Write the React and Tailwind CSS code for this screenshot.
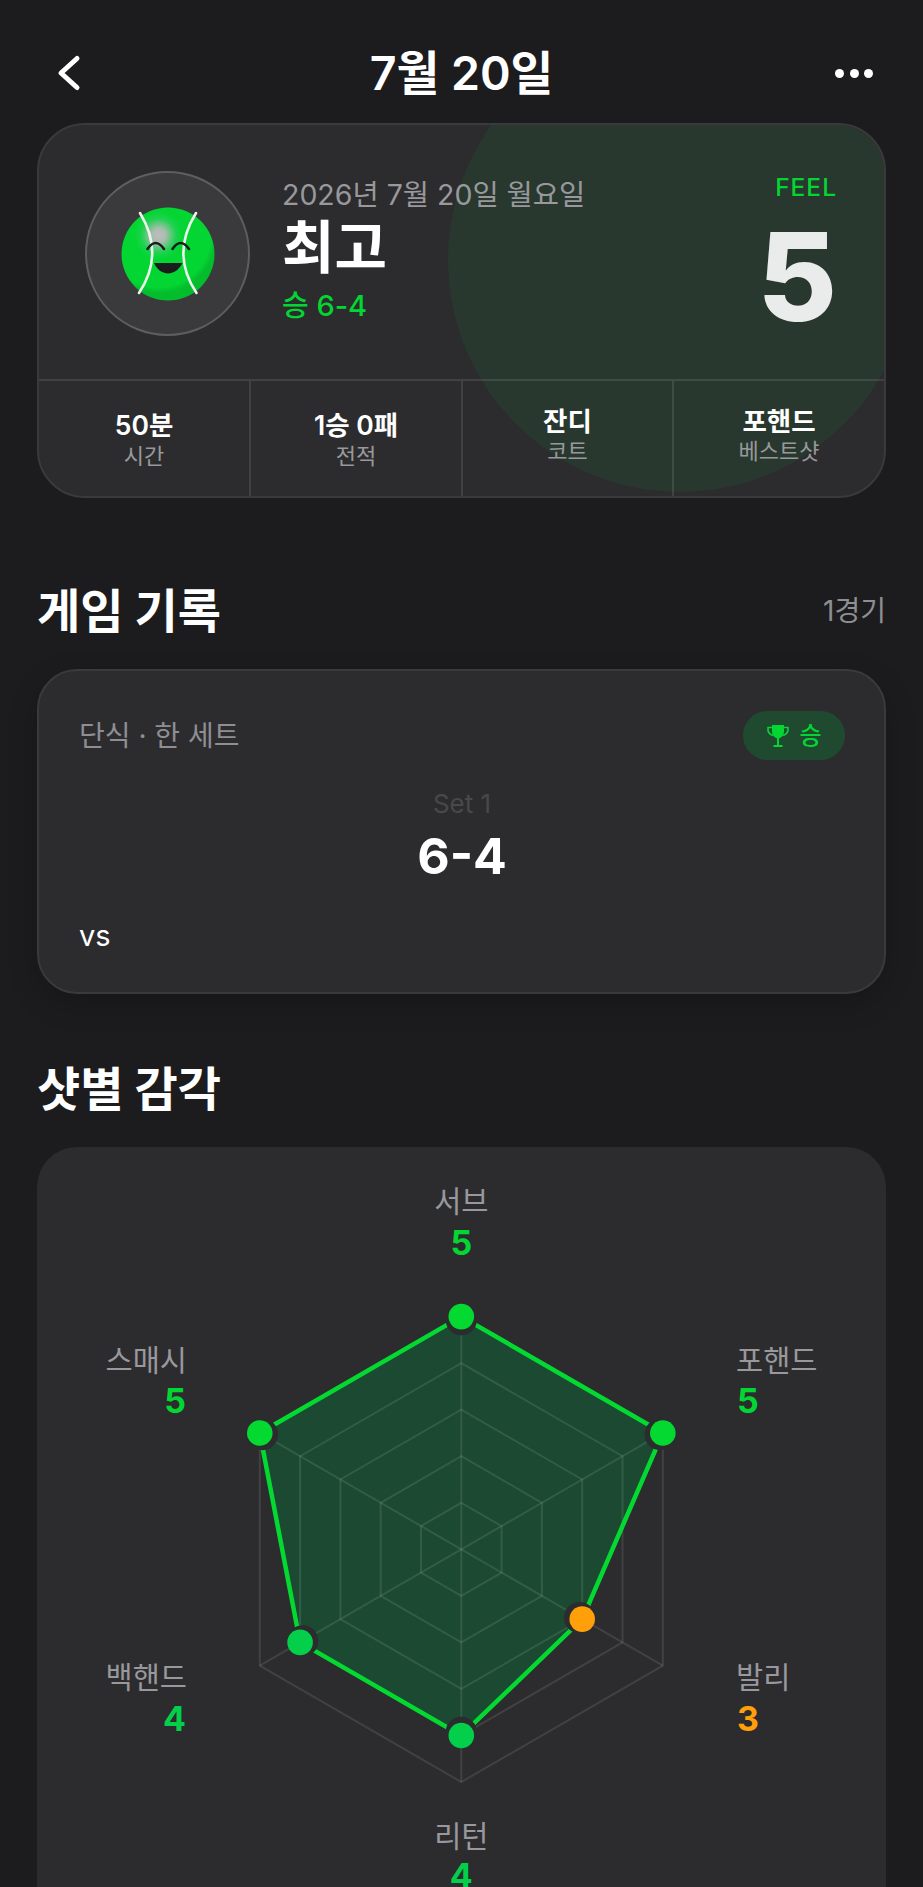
import React from "react";

const font = "font-['Inter','Noto_Sans_CJK_KR',sans-serif]";

const stats = [
	{ value: "50분", label: "시간", up: false },
	{ value: "1승 0패", label: "전적", up: false },
	{ value: "잔디", label: "코트", up: true },
	{ value: "포핸드", label: "베스트샷", up: true },
];

const cx = 461.3;
const cy = 1549.3 - 1147;
const R = 232.7;
const shots = [
	{ v: 5, color: "#04d932" },
	{ v: 5, color: "#04d932" },
	{ v: 3, color: "#ff9f0a" },
	{ v: 4, color: "#03cf4b" },
	{ v: 4, color: "#03cf4b" },
	{ v: 5, color: "#04d932" },
];

function pt(i, r) {
	const a = (Math.PI / 3) * i - Math.PI / 2;
	return [cx + r * Math.cos(a), cy + r * Math.sin(a)];
}
function ring(r) {
	return [0, 1, 2, 3, 4, 5].map((i) => pt(i, r).join(",")).join(" ");
}

function TennisFace() {
	return (
		<svg width="94" height="94" viewBox="0 0 94 94" className="overflow-visible">
			<defs>
				<radialGradient id="ball" cx="0.4" cy="0.3" r="0.62">
					<stop offset="0" stopColor="#bdbdbd" />
					<stop offset="0.12" stopColor="#a9bdaf" />
					<stop offset="0.3" stopColor="#1dd24f" />
					<stop offset="0.42" stopColor="#03d632" />
					<stop offset="0.9" stopColor="#03d632" />
					<stop offset="1" stopColor="#03bd2d" />
				</radialGradient>
			</defs>
			<circle cx="47" cy="47" r="46.5" fill="url(#ball)" />
			<path d="M19 6Q44 47 18 86" fill="none" stroke="#eef3ee" strokeWidth="2.6" strokeLinecap="round" />
			<path d="M75 6Q49.500 47 75.500 86" fill="none" stroke="#eef3ee" strokeWidth="2.6" strokeLinecap="round" />
			<path d="M26.500 42Q34.500 30 43 42" fill="none" stroke="#1c1c1e" strokeWidth="2.6" strokeLinecap="round" />
			<path d="M51.500 42Q59.500 30 68 42" fill="none" stroke="#1c1c1e" strokeWidth="2.6" strokeLinecap="round" />
			<path d="M33 56H61.500C58 63 52 66.500 47 66.500C42 66.500 36 63 33 56Z" fill="#1c1c1e" />
		</svg>
	);
}

function Radar() {
	const poly = shots.map((s, i) => pt(i, (R * s.v) / 5).join(",")).join(" ");
	return (
		<svg width="923" height="740" viewBox="0 0 923 740" className="block">
			<polygon points={poly} fill="#1c4931" />
			{[1, 2, 3, 4, 5].map((l) => (
				<polygon key={l} points={ring((R * l) / 5)} fill="none" stroke="#ffffff" strokeOpacity="0.1" strokeWidth="2" />
			))}
			{[0, 1, 2, 3, 4, 5].map((i) => {
				const p = pt(i, R);
				return <line key={i} x1={cx} y1={cy} x2={p[0]} y2={p[1]} stroke="#ffffff" strokeOpacity="0.1" strokeWidth="2" />;
			})}
			<polygon points={poly} fill="none" stroke="#04d932" strokeWidth="4.5" strokeLinejoin="round" />
			{shots.map((s, i) => {
				const r = (R * s.v) / 5;
				const a = pt(i, r - 3);
				const b = pt(i, r);
				return (
					<g key={i}>
						<circle cx={a[0]} cy={a[1]} r="15.7" fill="#2c2c2e" />
						<circle cx={b[0]} cy={b[1]} r="12.8" fill={s.color} />
					</g>
				);
			})}
			<g fontSize="29.500" fill="#98989d" fontFamily="Inter, 'Noto Sans CJK KR', sans-serif">
				<text x={cx} y="65" textAnchor="middle">서브</text>
				<text x="736" y="224" textAnchor="start">포핸드</text>
				<text x="736" y="541" textAnchor="start">발리</text>
				<text x={cx} y="700" textAnchor="middle">리턴</text>
				<text x="187" y="541" textAnchor="end">백핸드</text>
				<text x="187" y="224" textAnchor="end">스매시</text>
			</g>
			<g fontSize="34" fontWeight="700" fontFamily="Inter, 'Noto Sans CJK KR', sans-serif">
				<text x={cx} y="108" textAnchor="middle" fill="#03d632">5</text>
				<text x="737" y="266" textAnchor="start" fill="#03d632">5</text>
				<text x="737" y="584" textAnchor="start" fill="#ff9f0a">3</text>
				<text x={cx} y="741" textAnchor="middle" fill="#03cf4b">4</text>
				<text x="186" y="584" textAnchor="end" fill="#03cf4b">4</text>
				<text x="186" y="266" textAnchor="end" fill="#03d632">5</text>
			</g>
		</svg>
	);
}

export default function App() {
	return (
		<div className={`${font} h-[1887px] overflow-hidden bg-[#1c1c1e] text-white`}>
			<div className="flex h-[123px] items-center pt-[23px]">
				<div className="w-[150px] pl-[56px]">
					<svg width="26" height="38" viewBox="0 0 26 38" className="block" fill="none" stroke="#fff" strokeWidth="5" strokeLinecap="round" strokeLinejoin="round">
						<path d="M21 4.500 5 19 21 33.500" />
					</svg>
				</div>
				<h1 className="flex-1 text-center text-[46.5px] leading-none font-semibold">7월 20일</h1>
				<div className="flex w-[150px] justify-end gap-[5.300px] pr-[50px]">
					<span className="h-[9px] w-[9px] rounded-full bg-white" />
					<span className="h-[9px] w-[9px] rounded-full bg-white" />
					<span className="h-[9px] w-[9px] rounded-full bg-white" />
				</div>
			</div>

			<section className="relative mx-[37px] h-[375px] overflow-hidden rounded-[48px] border-2 border-[#3a3a3c] bg-[#2c2c2e]">
				<div className="absolute top-[-97px] left-[409px] h-[464px] w-[464px] rounded-full bg-[#29382e]" />
				<div className="relative flex h-[254px] items-start pr-[47px] pl-[46px]">
					<div className="mt-[46px] flex h-[165px] w-[165px] items-center justify-center rounded-full border-2 border-[#5e5e60] bg-[#3a3a3c]">
						<TennisFace />
					</div>
					<div className="ml-[32px] pt-[52px]">
						<p className="text-[28.500px] leading-[36px] text-[#98989d]">2026년 7월 20일 월요일</p>
						<p className="mt-[3px] text-[57px] leading-[64px] font-bold">최고</p>
						<p className="mt-[8px] text-[29px] leading-[36px] font-medium text-[#03d632]">승 6-4</p>
					</div>
					<div className="ml-auto flex flex-col items-end pt-[47px]">
						<p className="text-[24.500px] leading-[30px] font-medium tracking-[1px] text-[#03d632]">FEEL</p>
						<p className="mt-[15px] text-[122px] leading-[120px] font-extrabold text-[#e9eceb]">5</p>
					</div>
				</div>
				<div className="relative grid h-[118px] grid-cols-[210px_212px_211px_1fr] border-t-2 border-white/10">
					{stats.map((s, i) => (
						<div
							key={s.value}
							className={`flex flex-col items-center ${s.up ? "pt-[24px]" : "pt-[27px]"} ${i > 0 ? "border-l-2 border-white/10" : ""}`}
						>
							<p className={`text-[26.500px] font-semibold ${s.up ? "leading-[32px]" : "leading-[34px]"}`}>{s.value}</p>
							<p className="text-[22px] leading-[28px] text-[#98989d]">{s.label}</p>
						</div>
					))}
				</div>
			</section>

			<div className="mt-[85px] flex items-center justify-between px-[37px]">
				<h2 className="text-[47px] leading-[56px] font-bold">게임 기록</h2>
				<span className="text-[28px] text-[#8e8e93]">1경기</span>
			</div>

			<section className="mx-[37px] mt-[30px] flex h-[325px] flex-col rounded-[40px] border-2 border-[#3a3a3c] bg-[#2c2c2e] pt-[40px] pr-[39px] pl-[40px] shadow-[0_10px_30px_rgba(0,0,0,0.2)]">
				<div className="flex items-center justify-between">
					<p className="text-[28px] text-[#8e8e93]">단식 · 한 세트</p>
					<div className="flex h-[49px] w-[102px] items-center justify-center gap-[9px] rounded-full bg-[#1f4a30]">
						<svg width="24" height="24" viewBox="0 0 24 24" className="block">
							<path d="M6 1h12v6c0 4.500-2.500 7-6 7.500C8.500 14 6 11.500 6 7z" fill="#03d632" />
							<path d="M6 3.500H2C1.500 7.500 3.500 10.500 7 11.500M18 3.500h4c.5 4-1.500 7-5 8" fill="none" stroke="#03d632" strokeWidth="1.600" />
							<path d="M11 14h2v7h-2zM7.500 21h9v2h-9z" fill="#03d632" />
						</svg>
						<span className="text-[24px] font-medium text-[#03d632]">승</span>
					</div>
				</div>
				<p className="mt-[30px] text-center text-[26px] leading-[28px] text-[#48484a]">Set 1</p>
				<p className="mt-[8px] text-center text-[50px] leading-[60px] font-bold">6-4</p>
				<p className="mt-[34px] text-[29px] leading-[32px]">vs</p>
			</section>

			<h2 className="mt-[67px] px-[37px] text-[47px] leading-[56px] font-bold">샷별 감각</h2>

			<section className="relative mx-[37px] mt-[30px] h-[800px] overflow-hidden rounded-[40px] bg-[#2c2c2e]">
				<div className="absolute top-0 left-[-37px]">
					<Radar />
				</div>
			</section>
		</div>
	);
}
